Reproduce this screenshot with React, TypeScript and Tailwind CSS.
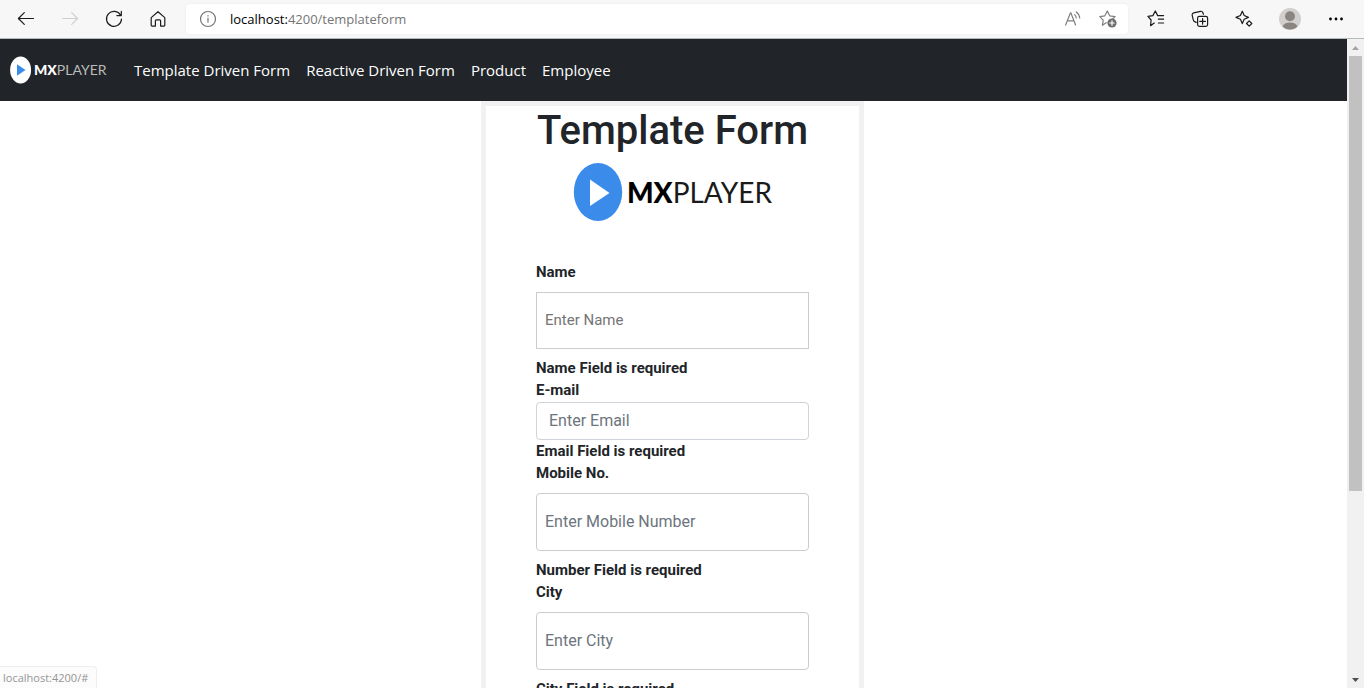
import type { ReactNode } from "react";

function IconButton({ label, children, disabled = false }: { label: string; children: ReactNode; disabled?: boolean }) {
  return (
    <button
      type="button"
      aria-label={label}
      disabled={disabled}
      className="flex h-9 w-11 shrink-0 items-center justify-center text-[#1b1b1b] disabled:text-[#cfcfcf]"
    >
      {children}
    </button>
  );
}

function Icon({ children }: { children: ReactNode }) {
  return (
    <svg
      width="20"
      height="20"
      viewBox="0 0 20 20"
      fill="none"
      stroke="currentColor"
      strokeWidth="1.2"
      strokeLinecap="round"
      strokeLinejoin="round"
      aria-hidden="true"
    >
      {children}
    </svg>
  );
}

function Toolbar() {
  return (
    <header className="flex h-[39px] shrink-0 items-center border-b border-[#b4b9b9] bg-[#f7f7f7] px-1">
      <IconButton label="Back">
        <Icon>
          <path d="M2.5 9.5H17.5M8.3 3.6 2.4 9.5l5.9 5.9" />
        </Icon>
      </IconButton>
      <IconButton label="Forward" disabled>
        <Icon>
          <path d="M2.5 9.5H17.5M11.7 3.6 17.6 9.5l-5.9 5.9" />
        </Icon>
      </IconButton>
      <IconButton label="Refresh">
        <Icon>
          <path d="M16.6 6.3A7.5 7.5 0 1 0 17.5 10M17.3 2.4v4.2h-4.4" />
        </Icon>
      </IconButton>
      <IconButton label="Home">
        <Icon>
          <path d="M3.2 8.6 10 2.7l6.8 5.9v7.7a.8.8 0 0 1-.8.8h-3.4v-5.3a.9.9 0 0 0-.9-.9H8.3a.9.9 0 0 0-.9.9v5.3H4a.8.8 0 0 1-.8-.8Z" />
        </Icon>
      </IconButton>

      <div className="mx-1.5 flex h-[30px] min-w-0 flex-1 items-center rounded bg-white shadow-[0_0_2px_rgba(0,0,0,0.08)]">
        <button type="button" aria-label="Site information" className="flex w-11 justify-center text-[#737373]">
          <Icon>
            <circle cx="10" cy="10" r="7.5" />
            <path d="M10 9.2v4M10 6.6v.3" />
          </Icon>
        </button>
        <p className="flex-1 truncate font-['Open_Sans',sans-serif] text-[13px] leading-5 text-[#757575]">
          <span className="text-black">localhost:</span>4200/templateform
        </p>
        <button type="button" aria-label="Read aloud" className="flex w-9 justify-center text-[#808080]">
          <Icon>
            <path d="M3.6 16 8.5 3.8h.3L13.6 16M5.3 11.8H12M12.6 5.6q1.6 1.3 1.6 3.4M14.3 2.9q3.2 2.4 3.4 6.1" />
          </Icon>
        </button>
        <button type="button" aria-label="Add to favorites" className="mr-0.5 flex w-9 justify-center text-[#808080]">
          <Icon>
            <path d="M8.2 13.7 4.4 16.3l.8-5.2L1.8 7.6l5-.8L9.3 2l2.4 4.8 5.4.8-2.3 2.2" />
            <circle cx="14" cy="14" r="4.6" fill="#6e6e6e" stroke="none" />
            <path d="M14 11.8v4.4M11.8 14h4.4" stroke="#fff" />
          </Icon>
        </button>
      </div>

      <IconButton label="Favorites">
        <Icon>
          <path d="M8.2 14 4.6 16.7l.5-5.7L1.9 7.4l5-.8L9.3 2l2.4 4.600h5.900M12.400 10.200h5.200M12.400 14h5.200" />
        </Icon>
      </IconButton>
      <IconButton label="Collections">
        <Icon>
          <path d="M6.200 13.400 5 12.900a2.600 2.600 0 0 1-1.700-2L2.200 6.300a2 2 0 0 1 1.500-2.400l6.900-1.600a2 2 0 0 1 2.200 1.200l.6 1.700" />
          <rect x="7.6" y="7.4" width="10" height="10" rx="1.8" fill="#f7f7f7" />
          <path d="M12.6 9.6v5.6M9.8 12.4h5.6" />
        </Icon>
      </IconButton>
      <IconButton label="Discover">
        <Icon>
          <path d="M8.3 2.2 10.200 6.500 14.400 8.400 10.200 10.300 8.300 14.600 6.400 10.300 2 8.400 6.400 6.500ZM15.200 11.800l2.600 2.700-2.600 2.700-2.700-2.700Z" />
        </Icon>
      </IconButton>
      <button type="button" aria-label="Profile" className="flex h-9 w-12 shrink-0 items-center justify-center">
        <svg width="22" height="22" viewBox="0 0 22 22" aria-hidden="true">
          <circle cx="11" cy="11" r="11" fill="#d2d0ce" />
          <circle cx="11" cy="8.3" r="5" fill="#8a8580" />
          <path d="M3.5 18.2C4.8 15.5 8 14.5 11 14.5s6.2 1 7.5 3.7A10.5 10.5 0 0 1 11 21.5a10.5 10.5 0 0 1-7.5-3.3Z" fill="#8a8580" />
        </svg>
      </button>
      <button type="button" aria-label="Settings and more" className="mr-0.5 flex h-9 w-11 shrink-0 items-center justify-center text-black">
        <svg width="20" height="20" viewBox="0 0 20 20" fill="currentColor" aria-hidden="true">
          <circle cx="4.5" cy="10" r="1.4" />
          <circle cx="10" cy="10" r="1.4" />
          <circle cx="15.5" cy="10" r="1.4" />
        </svg>
      </button>
    </header>
  );
}

const links = ["Template Driven Form", "Reactive Driven Form", "Product", "Employee"];

function Navbar() {
  return (
    <nav className="flex h-[62px] items-center bg-[#212529] pl-2.5 font-['Open_Sans',sans-serif] text-white">
      <a href="#" className="flex w-[116px] shrink-0 items-center gap-0.5">
        <svg width="22" height="28" viewBox="0 0 22 28" aria-hidden="true">
          <ellipse cx="10.6" cy="14" rx="10.5" ry="13.5" fill="#fff" />
          <path d="M7 8.2 15.5 14 7 19.8Z" fill="#3b8beb" />
        </svg>
        <span className="font-[Lato,sans-serif] text-[14px] leading-5 font-normal text-[#b9bbbc]">
          <b className="font-black text-white">MX</b>PLAYER
        </span>
      </a>
      <ul className="flex">
        {links.map((link) => (
          <li key={link}>
            <a href="#" className="block px-2 py-2 text-[15px] leading-6">
              {link}
            </a>
          </li>
        ))}
      </ul>
    </nav>
  );
}

interface FieldProps {
  id: string;
  label: string;
  placeholder: string;
  error: string;
  type?: string;
  inputClass: string;
}

function Field({ id, label, placeholder, error, type = "text", inputClass }: FieldProps) {
  return (
    <div className="flex flex-col text-[15px] leading-[22px] font-bold">
      <label htmlFor={id} className="h-[23px]">
        {label}
      </label>
      <input
        id={id}
        type={type}
        placeholder={placeholder}
        className={`w-full border bg-white pb-0.5 font-normal outline-none ${inputClass}`}
      />
      <p>{error}</p>
    </div>
  );
}

function TemplateForm() {
  return (
    <form className="mx-auto w-[383px] border-5 border-[#f1f1f1] px-[50px] font-[Roboto,sans-serif] text-[#212529]">
      <h1 className="text-center text-[40px] leading-[50px] font-medium whitespace-nowrap">Template Form</h1>
      <div className="mt-1.5 mb-[39px] flex h-[60px] items-center justify-center gap-1">
        <svg width="50" height="60" viewBox="0 0 50 60" aria-hidden="true">
          <ellipse cx="25" cy="30" rx="24.2" ry="29" fill="#3b8beb" />
          <path d="M17 17.5 36.5 31 17 44Z" fill="#fff" />
        </svg>
        <span className="font-[Lato,sans-serif] text-[28px] leading-10 font-normal text-[#1a1a1a]">
          <b className="font-black text-black">MX</b>PLAYER
        </span>
      </div>
      <Field id="name" label="Name" placeholder="Enter Name" error="Name Field is required" inputClass="my-2 h-[57px] border-[#ccc] px-2 text-[15px] placeholder:text-[#757575]" />
      <Field id="email" type="email" label="E-mail" placeholder="Enter Email" error="Email Field is required" inputClass="h-[38px] rounded border-[#ced4da] px-3 text-base placeholder:text-[#6c757d]" />
      <Field id="mobile" type="tel" label="Mobile No." placeholder="Enter Mobile Number" error="Number Field is required" inputClass="my-2 h-[58px] rounded border-[#ccc] px-2 text-base placeholder:text-[#6c757d]" />
      <Field id="city" label="City" placeholder="Enter City" error="City Field is required" inputClass="my-2 h-[58px] rounded border-[#ccc] px-2 text-base placeholder:text-[#6c757d]" />
    </form>
  );
}

function Scrollbar() {
  return (
    <div className="flex w-[17px] shrink-0 flex-col items-center bg-[#f1f1f1]" aria-hidden="true">
      <div className="flex h-[17px] w-full shrink-0 items-center justify-center">
        <svg width="7" height="4" viewBox="0 0 7 4">
          <path d="M0 4 3.5 0 7 4Z" fill="#a3a3a3" />
        </svg>
      </div>
      <div className="h-[67%] w-[13px] bg-[#c1c1c1]" />
      <div className="mt-auto flex h-[17px] w-full shrink-0 items-center justify-center">
        <svg width="7" height="4" viewBox="0 0 7 4">
          <path d="M0 0 3.5 4 7 0Z" fill="#505050" />
        </svg>
      </div>
    </div>
  );
}

export default function App() {
  return (
    <div className="relative flex h-screen flex-col overflow-hidden bg-white">
      <Toolbar />
      <div className="flex min-h-0 flex-1">
        <div className="min-w-0 flex-1 overflow-hidden">
          <Navbar />
          <main className="pr-0.5">
            <TemplateForm />
          </main>
        </div>
        <Scrollbar />
      </div>
      <div className="absolute bottom-0 left-0 rounded-tr border-t border-r border-[#eee] bg-[#fcfcfc] pr-2 pl-[3px] font-['Open_Sans',sans-serif] text-[11px] leading-[21px] text-[#949494]">
        localhost:4200/#
      </div>
    </div>
  );
}
